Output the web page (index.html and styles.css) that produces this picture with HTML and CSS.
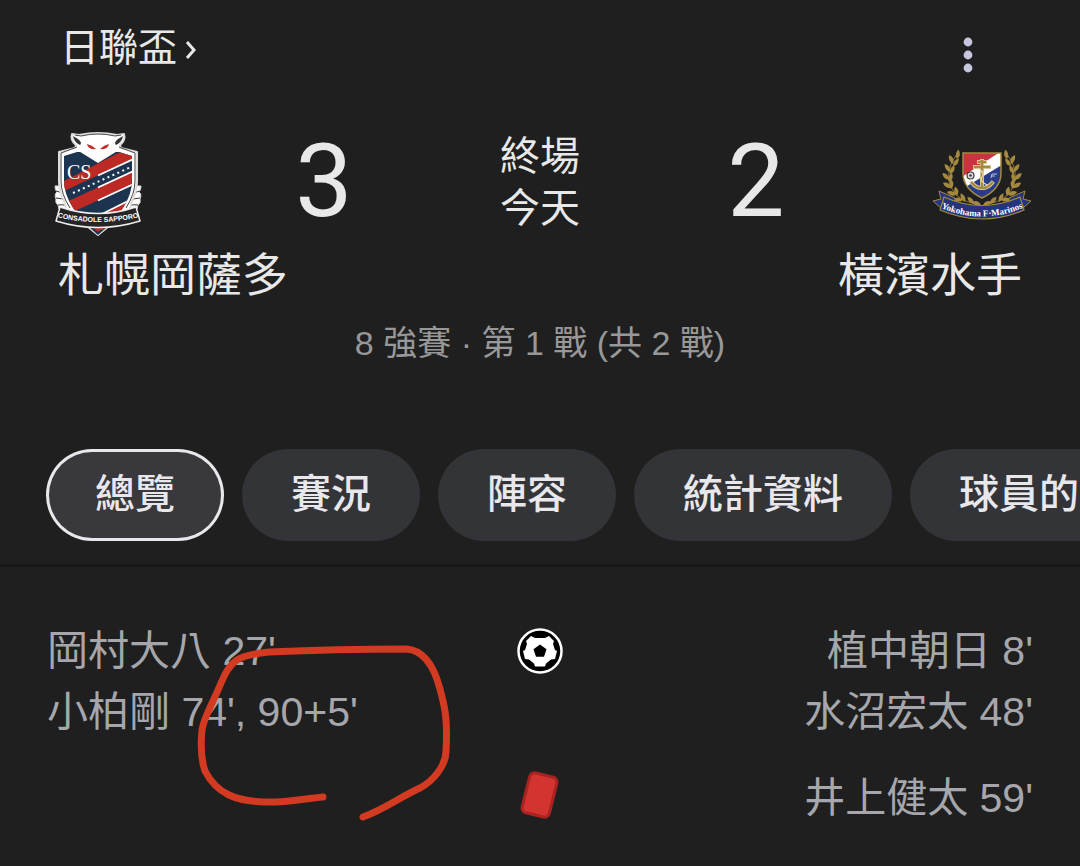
FILE: index.html
```html
<!DOCTYPE html>
<html lang="zh-Hant">
<head>
  <meta charset="UTF-8" />
  <meta name="viewport" content="width=device-width, initial-scale=1.0" />
  <title>札幌岡薩多 3 - 2 橫濱水手</title>
  <link rel="stylesheet" href="styles.css">
</head>
<body>
  <header class="top">
    <a class="league" href="#">日聯盃<svg class="chevron" viewBox="0 0 12 24" aria-hidden="true"><path d="M2 6l7 8-7 8" /></svg></a>
    <button class="more" type="button" aria-label="更多">
      <svg viewBox="0 0 10 36"><circle cx="5" cy="5" r="4.4" /><circle cx="5" cy="18" r="4.4" /><circle cx="5" cy="31" r="4.4" /></svg>
    </button>
  </header>

  <section class="match">
    <div class="scoreboard">
      <svg class="crest" viewBox="8 8 100 112" aria-hidden="true">
        <!-- wings -->
        <g fill="#fff" stroke="#ddd" stroke-width="1">
          <path d="M24 66l-9 0q0 4 2 6q-3 2-1 7q-1 4 2 6l1 4l12-1z" />
          <path d="M92 66l9 0q0 4-2 6q3 2 1 7q1 4-2 6l-1 4l-12-1z" />
        </g>
        <path d="M16 71q6 1 9 4M16 78q6 0 10 3M18 85q5-1 9 1M100 71q-6 1-9 4M100 78q-6 0-10 3M98 85q-5-1-9 1" fill="none" stroke="#333" stroke-width="1" />
        <!-- shield and owl head -->
        <path d="M32 14l7 1q19-4 38 0l7-1q2 6-4 11l1 3l16 4v29q0 10-5 20l-5 17l-18 8l-11 9l-11-9l-18-8l-5-17q-5-10-5-20v-29l16-4l1-3q-6-5-4-11z" fill="#fff" stroke="#ddd" stroke-width="2" stroke-linejoin="round" />
        <path d="M35 15l6 1q17-4 34 0l6-1M37 27l-16 6v28q0 13 9 27M79 27l16 6v28q0 13-9 27" fill="none" stroke="#444" stroke-width="1" />
        <path d="M33 16q1 7 9 10q-1-5-4-7zM83 16q-1 7-9 10q1-5 4-7z" fill="#333" />
        <clipPath id="shield"><path d="M24 36l13-4h42l13 4v25q0 25-34 54q-34-29-34-54z" /></clipPath>
        <g clip-path="url(#shield)">
          <path d="M20 30h76v90H20z" fill="#1c344f" />
          <path d="M22 62L96 24V38L22 72z" fill="#bd2924" />
          <path d="M22 84L96 50V63L22 97z" fill="#bd2924" />
          <path d="M58 96L96 77V110H58z" fill="#bd2924" />
          <path d="M58 55.500L96 38M58 67.500L96 50M58 80.500L96 63M62 94L96 77" stroke="#fff" stroke-width="1.800" />
          <path d="M33 73l58-26" stroke="#fff" stroke-width="2" stroke-dasharray="2 3.400" />
        </g>
        <path d="M37 30q3-3 4-7h34q1 4 4 7L58 43z" fill="#fff" />
        <path d="M47 24q1 6 9 5q-4-4-9-5zM69 24q-1 6-9 5q4-4 9-5z" fill="#c42a2d" />
        <text class="crest-initials" x="27" y="59">CS</text>
        <!-- name band -->
        <path d="M50 105h16l-8 7z" fill="#c42a2d" />
        <path d="M20 87q38 13 76 0l4 14q-42 13-84 0z" fill="#252525" stroke="#eee" stroke-width="1.500" stroke-linejoin="round" />
        <path id="band" d="M16 97q42 10 84 0" fill="none" />
        <text class="crest-name"><textPath href="#band" startOffset="50%">CONSADOLE SAPPORO</textPath></text>
      </svg>
      <span class="score">3</span>
      <div class="status">
        <span>終場</span>
        <span>今天</span>
      </div>
      <span class="score">2</span>
      <svg class="crest" viewBox="12 -7 100 112" aria-hidden="true">
        <defs>
          <path id="leaf" d="M0 0q-4.500-3.500-2-9.500q5.500 4 2 9.500z" />
          <g id="laurel" fill="#a48a3e">
            <path d="M37 19Q24 36 31 52T60 69" fill="none" stroke="#8b7433" />
            <use href="#leaf" transform="translate(37 24) rotate(20)" />
            <use href="#leaf" transform="translate(33 29) rotate(-12)" />
            <use href="#leaf" transform="translate(33 31) rotate(48)" />
            <use href="#leaf" transform="translate(30 37) rotate(-22)" />
            <use href="#leaf" transform="translate(30 39) rotate(38)" />
            <use href="#leaf" transform="translate(29 45) rotate(-32)" />
            <use href="#leaf" transform="translate(29 47) rotate(28)" />
            <use href="#leaf" transform="translate(31 53) rotate(-45)" />
            <use href="#leaf" transform="translate(31 54) rotate(14)" />
            <use href="#leaf" transform="translate(36 60) rotate(-60)" />
            <use href="#leaf" transform="translate(37 61) rotate(0)" />
            <use href="#leaf" transform="translate(43 65) rotate(-75)" />
            <use href="#leaf" transform="translate(45 67) rotate(-15)" />
            <use href="#leaf" transform="translate(54 69) rotate(-32)" />
            <use href="#leaf" transform="translate(61 70) rotate(-60)" />
          </g>
          <clipPath id="badge"><path d="M43 18h38v20q0 16-19 25q-19-9-19-25z" /></clipPath>
        </defs>
        <use href="#laurel" />
        <use href="#laurel" transform="matrix(-1 0 0 1 124 0)" />
        <g clip-path="url(#badge)">
          <path d="M42 17h40v47H42z" fill="#fff" />
          <path d="M42 17h38L42 42z" fill="#c93440" />
          <path d="M82 30L42 54v12h40z" fill="#2a3b88" />
        </g>
        <path d="M43 18h38v20q0 16-19 25q-19-9-19-25z" fill="none" stroke="#a48a3e" stroke-width="1.500" />
        <circle cx="50.500" cy="40.500" r="3.500" fill="#ddd" stroke="#333" stroke-width="1.200" />
        <circle cx="50.500" cy="40.500" r="1.200" fill="#333" />
        <path d="M71 43l1-4h5M71 41h4" fill="none" stroke="#b9c0dc" stroke-width="1" />
        <g fill="none" stroke-linecap="square">
          <path d="M62 26v26M55 32h14M59 27h6M52 48q4 5 10 5t10-5" stroke="#e5d8aa" stroke-width="4" />
          <path d="M62 26v26M55 32h14M59 27h6M52 48q4 5 10 5t10-5" stroke="#a48a3e" stroke-width="2.600" />
          <path d="M59 34q6 4 3 8t5 8" stroke="#ede2bc" stroke-width="1.200" />
        </g>
        <!-- ribbon -->
        <path d="M19 56l16 7v12l-14-2l-8-7l8-2zM105 56l-16 7v12l14-2l8-7l-8-2z" fill="#25347c" stroke="#a48a3e" stroke-width="1" />
        <path d="M24 62q38 17 76 0l4 13q-42 18-84 0z" fill="#25347c" stroke="#a48a3e" stroke-width="1.200" />
        <path id="ribbon" d="M21 73q41 17 82 0" fill="none" />
        <text class="ribbon-name"><textPath href="#ribbon" startOffset="50%">Yokohama F·Marinos</textPath></text>
      </svg>
    </div>
    <div class="teams">
      <span>札幌岡薩多</span>
      <span>橫濱水手</span>
    </div>
    <p class="stage">8 強賽 · 第 1 戰 (共 2 戰)</p>
  </section>

  <nav class="tabs">
    <button class="tab active" type="button">總覽</button>
    <button class="tab" type="button">賽況</button>
    <button class="tab" type="button">陣容</button>
    <button class="tab" type="button">統計資料</button>
    <button class="tab" type="button">球員的</button>
  </nav>

  <section class="events">
    <div class="event">
      <div class="home">岡村大八 27'<br>小柏剛 74', 90+5'</div>
      <svg class="event-icon" viewBox="0 0 46 46" role="img" aria-label="進球">
        <circle cx="23" cy="23" r="21.500" fill="#000" stroke="#fff" stroke-width="2.500" />
        <path d="M18 10h10l4-2l5 5l-1 3l2 6l2 1l-2 8l-4 .5l-5 4l-1 3h-10l-1-3l-5-4l-4-.5l-2-8l2-1l2-6l-1-3l5-5z" fill="#fff" />
        <path d="M23 16.500l6.500 4.700-2.500 7.600h-8l-2.500-7.600z" fill="#000" />
      </svg>
      <div class="away">植中朝日 8'<br>水沼宏太 48'</div>
    </div>
    <div class="event">
      <div class="home"></div>
      <svg class="event-icon" viewBox="0 0 46 46" role="img" aria-label="紅牌">
        <rect x="8.500" y="-.5" width="28" height="41" rx="5" fill="#d33430" stroke="#a92420" stroke-width="3" transform="rotate(14 22.500 20)" />
      </svg>
      <div class="away">井上健太 59'</div>
    </div>
    <!-- hand-drawn mark around the late goal -->
    <svg class="mark" viewBox="0 0 260 180" aria-hidden="true">
      <path d="M129 153C108 155 90 159 70 158C42 157 23 150 11 127C6 112 7 96 8 86C10 72 19 59 27 39C36 17 43 11 75 8C120 6 170 5 212 5C230 6 240 22 246 45C250 61 254 72 252 107C252 122 239 137 226 144C206 153 191 165 169 173" />
    </svg>
  </section>
</body>
</html>
```
FILE: styles.css
```css
* {
  box-sizing: border-box;
}
body {
  margin: 0;
  min-height: 100vh;
  background: #1f1f1f;
  color: #e8e8e8;
  font-family: "Liberation Sans", "Noto Sans CJK TC", sans-serif;
  font-size: 40px;
  overflow-x: hidden;
}
button {
  font: inherit;
  color: inherit;
  border: none;
  cursor: pointer;
}

/* league name and menu */
.top {
  display: flex;
  justify-content: space-between;
  align-items: center;
  padding: 20px 104px 0 60px;
}
.league {
  display: flex;
  align-items: center;
  gap: 8px;
  color: inherit;
  font-size: 39px;
  line-height: 56px;
  text-decoration: none;
}
.chevron {
  width: 12px;
  height: 24px;
  fill: none;
  stroke: #e8e8e8;
  stroke-width: 3;
}
.more {
  background: none;
  padding: 14px 3px 0;
}
.more svg {
  display: block;
  width: 10px;
  height: 36px;
  fill: #c6c6de;
}

/* score */
.match {
  padding: 52px 48px 0;
}
.scoreboard {
  display: grid;
  grid-template-columns: 100px 1fr auto 1fr 100px;
  align-items: center;
}
.crest {
  display: block;
  width: 100px;
  height: 112px;
}
.crest-initials {
  font-family: "Liberation Serif", serif;
  font-size: 20px;
  fill: #fff;
}
.crest-name {
  font-family: "Liberation Sans Narrow", "Liberation Sans", sans-serif;
  font-size: 7px;
  font-weight: bold;
  fill: #fff;
  text-anchor: middle;
}
.ribbon-name {
  font-family: "Liberation Serif", serif;
  font-size: 9px;
  font-weight: bold;
  fill: #fff;
  text-anchor: middle;
}
.score {
  padding-bottom: 6px;
  font-family: Roboto, sans-serif;
  font-size: 102px;
  line-height: 106px;
  text-align: center;
}
.status {
  display: flex;
  flex-direction: column;
  padding-bottom: 4px;
  line-height: 52px;
}
.teams {
  display: flex;
  justify-content: space-between;
  padding: 0 10px;
  font-size: 46px;
  line-height: 70px;
}
.stage {
  margin: 0;
  color: #989898;
  font-size: 34px;
  line-height: 66px;
  text-align: center;
}

/* tabs */
.tabs {
  display: flex;
  gap: 18px;
  margin-top: 73px;
  padding: 0 0 23px 46px;
  border-bottom: 3px solid #181818;
  overflow: hidden;
}
.tab {
  flex: none;
  height: 92px;
  padding: 0 49px 8px;
  border-radius: 46px;
  background: #333438;
  color: #e8e8ec;
  font-weight: 500;
}
.active {
  background: #39383d;
  box-shadow: inset 0 0 0 3px #e8e8ec;
}

/* goals and cards */
.events {
  position: relative;
  display: flex;
  flex-direction: column;
  gap: 25px;
  padding: 54px 47px 0;
  color: #a6a7ad;
  font-size: 41px;
  line-height: 61px;
}
.event {
  display: grid;
  grid-template-columns: 1fr 46px 1fr;
}
.event-icon {
  width: 46px;
  height: 46px;
  margin-top: 7px;
  overflow: visible;
}
.away {
  text-align: right;
}
.mark {
  position: absolute;
  left: 194px;
  top: 77px;
  width: 260px;
  height: 180px;
  fill: none;
  stroke: #d23a22;
  stroke-width: 7;
  stroke-linecap: round;
}
```
